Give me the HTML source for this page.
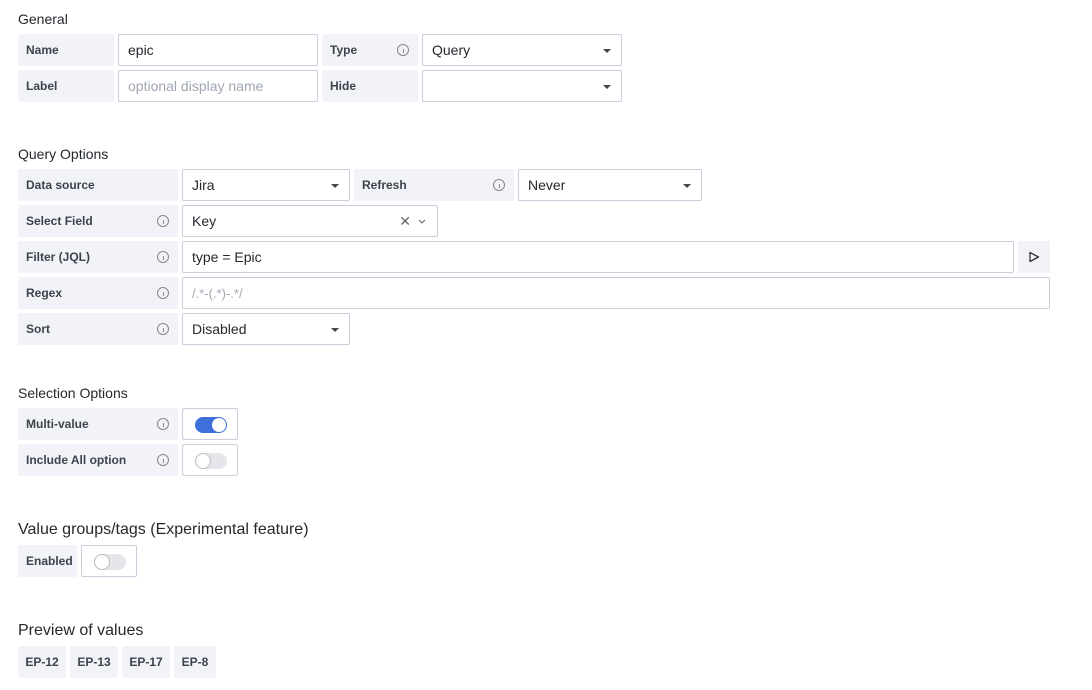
<!DOCTYPE html>
<html><head><style>
body{margin:0;width:1092px;height:690px;background:#fff;font-family:"Liberation Sans",sans-serif;color:#24292e;position:relative;overflow:hidden}
.a{position:absolute;box-sizing:border-box}
.h{font-size:14px;color:#24292e}
.h2{font-size:16px}
.l{background:#f1f3f8;border-radius:2px;font-size:12px;font-weight:bold;color:#3d434b;padding-left:8px;display:flex;align-items:center;height:32px}
.i{border:1px solid #ccccdc;border-radius:2px;background:#fff;font-size:14px;padding-left:9px;display:flex;align-items:center;height:32px}
.ph{color:#9fa7b3}
.car{position:absolute;right:10px;top:14px;width:0;height:0;border-left:4px solid transparent;border-right:4px solid transparent;border-top:4px solid #444}
.inf{position:absolute;right:9px;top:10px;width:12px;height:12px;border:1px solid #888;border-radius:50%;box-sizing:border-box}
.inf:after{content:"";position:absolute;left:4.5px;top:4px;width:1px;height:4px;background:#888}
.tg{position:absolute;left:12px;top:8px;width:32px;height:16px;border-radius:8px;background:#e4e6eb}
.tg b{position:absolute;left:1px;top:1px;width:14px;height:14px;border-radius:50%;background:#fff;box-shadow:0 0 0 1px #bbb}
.tg.on{background:#3d71d9}
.tg.on b{left:17px;box-shadow:none}
.c{justify-content:center;padding-left:0}
</style></head><body>
<div class="a h" style="left:18px;top:11px">General</div>
<div class="a l" style="left:18px;top:34px;width:96px">Name</div>
<div class="a i" style="left:118px;top:34px;width:200px">epic</div>
<div class="a l" style="left:322px;top:34px;width:96px">Type<span class="inf"></span></div>
<div class="a i" style="left:422px;top:34px;width:200px">Query<span class="car"></span></div>
<div class="a l" style="left:18px;top:70px;width:96px">Label</div>
<div class="a i" style="left:118px;top:70px;width:200px"><span class="ph">optional display name</span></div>
<div class="a l" style="left:322px;top:70px;width:96px">Hide</div>
<div class="a i" style="left:422px;top:70px;width:200px"><span class="car"></span></div>

<div class="a h" style="left:18px;top:146px">Query Options</div>
<div class="a l" style="left:18px;top:169px;width:160px">Data source</div>
<div class="a i" style="left:182px;top:169px;width:168px">Jira<span class="car"></span></div>
<div class="a l" style="left:354px;top:169px;width:160px">Refresh<span class="inf"></span></div>
<div class="a i" style="left:518px;top:169px;width:184px">Never<span class="car"></span></div>
<div class="a l" style="left:18px;top:205px;width:160px">Select Field<span class="inf"></span></div>
<div class="a i" style="left:182px;top:205px;width:256px">Key<span style="position:absolute;right:26px;top:7px;font-size:14px;color:#666">✕</span><svg style="position:absolute;right:11px;top:13px" width="8" height="6"><path d="M1 1l3 3 3-3" stroke="#666" fill="none"/></svg></div>
<div class="a l" style="left:18px;top:241px;width:160px">Filter (JQL)<span class="inf"></span></div>
<div class="a i" style="left:182px;top:241px;width:832px">type = Epic</div>
<div class="a l c" style="left:1018px;top:241px;width:32px"><svg width="12" height="12"><path d="M2 1.5L10.5 6 2 10.5Z" stroke="#333" stroke-width="1.3" fill="none" stroke-linejoin="round"/></svg></div>
<div class="a l" style="left:18px;top:277px;width:160px">Regex<span class="inf"></span></div>
<div class="a i" style="left:182px;top:277px;width:868px;font-size:13px"><span class="ph">/.*-(.*)-.*/</span></div>
<div class="a l" style="left:18px;top:313px;width:160px">Sort<span class="inf"></span></div>
<div class="a i" style="left:182px;top:313px;width:168px">Disabled<span class="car"></span></div>

<div class="a h" style="left:18px;top:385px">Selection Options</div>
<div class="a l" style="left:18px;top:408px;width:160px">Multi-value<span class="inf"></span></div>
<div class="a i" style="left:182px;top:408px;width:56px"><span class="tg on"><b></b></span></div>
<div class="a l" style="left:18px;top:444px;width:160px">Include All option<span class="inf"></span></div>
<div class="a i" style="left:182px;top:444px;width:56px"><span class="tg"><b></b></span></div>

<div class="a h h2" style="left:18px;top:521px">Value groups/tags (Experimental feature)</div>
<div class="a l" style="left:18px;top:545px;width:59px">Enabled</div>
<div class="a i" style="left:81px;top:545px;width:56px"><span class="tg"><b></b></span></div>

<div class="a h h2" style="left:18px;top:622px">Preview of values</div>
<div class="a l c" style="left:18px;top:646px;width:48px">EP-12</div>
<div class="a l c" style="left:70px;top:646px;width:48px">EP-13</div>
<div class="a l c" style="left:122px;top:646px;width:48px">EP-17</div>
<div class="a l c" style="left:174px;top:646px;width:42px">EP-8</div>
</body></html>
